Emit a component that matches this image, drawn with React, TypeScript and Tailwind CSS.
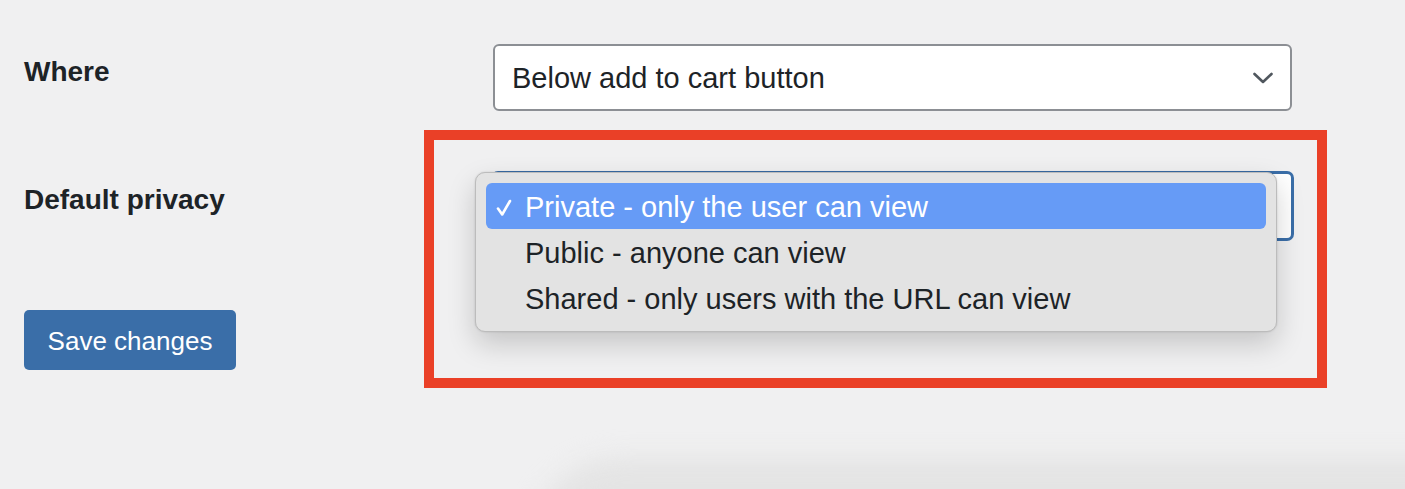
const font = "font-['Liberation_Sans',Arial,sans-serif]";

function Chevron() {
  return (
    <svg width="22" height="14" viewBox="0 0 22 14" fill="none" className="shrink-0">
      <path d="M2.5 3 L11 11 L19.5 3" stroke="#50575e" strokeWidth="2.6" strokeLinecap="round" strokeLinejoin="round" />
    </svg>
  );
}

function Check() {
  return (
    <svg width="16" height="18" viewBox="0 0 16 18" fill="none" className="shrink-0">
      <path d="M2 9.5 L6.2 15.5 L14 2" stroke="white" strokeWidth="2.6" strokeLinecap="round" strokeLinejoin="round" />
    </svg>
  );
}

const options = [
  'Private - only the user can view',
  'Public - anyone can view',
  'Shared - only users with the URL can view',
];

export default function App() {
  return (
    <div className={`${font} relative h-[489px] w-full overflow-hidden bg-[#f0f0f1] text-[#1d2327]`}>
      {/* faint shadow of a window behind, bottom right */}
      <div className="absolute left-[530px] top-[458px] h-[200px] w-[1000px] rounded-[90px] bg-[#e4e4e4] blur-[12px]" />

      <div className="relative pl-[24px] pt-[44px]">
        {/* Where */}
        <div className="flex items-start">
          <div className="w-[469px] pt-[12px] text-[28px] font-bold leading-[32px]">Where</div>
          <div className="flex h-[67px] w-[799px] items-center justify-between rounded-[6px] border-2 border-[#8c8f94] bg-white pl-[17px] pr-[16px]">
            <span className="pt-[2px] text-[29px] leading-none">Below add to cart button</span>
            <Chevron />
          </div>
        </div>

        {/* Default privacy */}
        <div className="mt-[60px] flex items-start">
          <div className="w-[467px] pt-[13px] text-[28px] font-bold leading-[32px]">Default privacy</div>
          <div className="h-[70px] w-[803px] rounded-[7px] border-[3px] border-[#3a6ea8] bg-white" />
        </div>

        <button className="mt-[69px] flex h-[60px] w-[212px] items-center justify-center rounded-[5px] bg-[#3a6ea8] pt-[2px] text-[26px] leading-none text-white">
          Save changes
        </button>
      </div>

      {/* open native dropdown */}
      <div className="absolute left-[475px] top-[172px] w-[802px] rounded-[10px] border border-[#bcbcbc] bg-[#e3e3e3] p-[10px] shadow-[0_12px_28px_rgba(0,0,0,0.18),0_0_2px_rgba(0,0,0,0.15)]">
        {options.map((o, i) => (
          <div
            key={o}
            className={`flex h-[46px] items-center rounded-[6px] pl-[10px] pt-[3px] text-[29px] leading-none ${
              i === 0 ? 'bg-[#669bf6] text-white' : 'text-[#1d2327]'
            }`}
          >
            <span className="flex w-[29px] shrink-0">{i === 0 ? <Check /> : null}</span>
            <span>{o}</span>
          </div>
        ))}
      </div>

      {/* annotation box */}
      <div className="absolute left-[424px] top-[130px] h-[258px] w-[903px] border-[10px] border-[#ea4027]" />
    </div>
  );
}
